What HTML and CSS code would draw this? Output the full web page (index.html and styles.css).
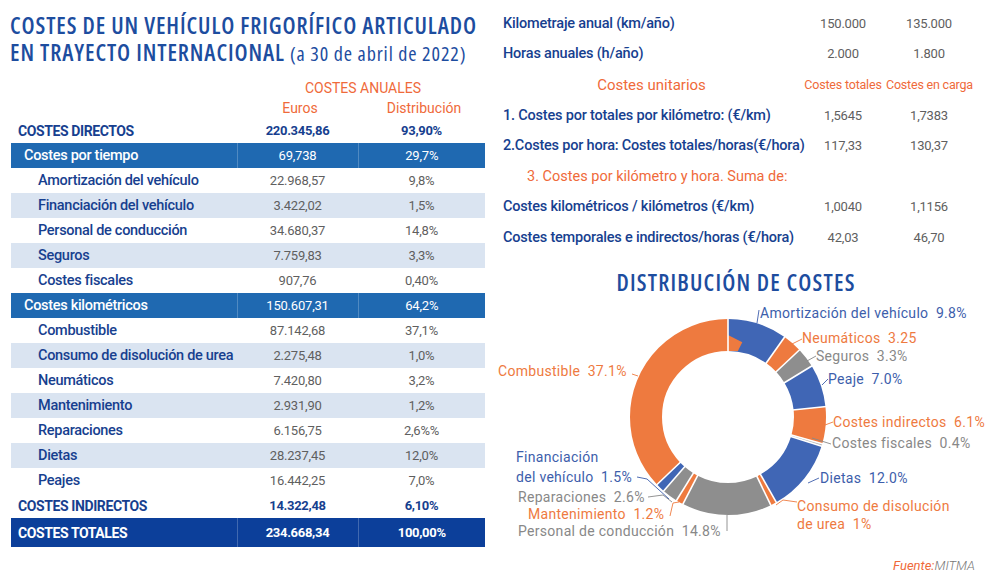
FILE: index.html
```html
<!DOCTYPE html>
<html lang="es">
<head>
<meta charset="utf-8">
<title>Costes de un vehículo frigorífico articulado</title>
<link rel="stylesheet" href="styles.css">
</head>
<body>
<div class="page">
  <section class="left">
    <h1 class="title"><span class="tl">COSTES DE UN VEHÍCULO FRIGORÍFICO ARTICULADO</span><span class="tl">EN TRAYECTO INTERNACIONAL <span class="date">(a 30 de abril de 2022)</span></span></h1>
    <div class="head">
      <div class="head-top">COSTES ANUALES</div>
      <div class="head-e">Euros</div>
      <div class="head-d">Distribución</div>
    </div>
    <table class="costs">
      <colgroup><col class="c1"><col class="c2"><col class="c3"></colgroup>
      <tr class="main"><td class="lbl">COSTES DIRECTOS</td><td>220.345,86</td><td>93,90%</td></tr>
      <tr class="grp"><td class="lbl">Costes por tiempo</td><td>69,738</td><td>29,7%</td></tr>
      <tr><td class="lbl">Amortización del vehículo</td><td>22.968,57</td><td>9,8%</td></tr>
      <tr class="alt"><td class="lbl">Financiación del vehículo</td><td>3.422,02</td><td>1,5%</td></tr>
      <tr><td class="lbl">Personal de conducción</td><td>34.680,37</td><td>14,8%</td></tr>
      <tr class="alt"><td class="lbl">Seguros</td><td>7.759,83</td><td>3,3%</td></tr>
      <tr><td class="lbl">Costes fiscales</td><td>907,76</td><td>0,40%</td></tr>
      <tr class="grp"><td class="lbl">Costes kilométricos</td><td>150.607,31</td><td>64,2%</td></tr>
      <tr><td class="lbl">Combustible</td><td>87.142,68</td><td>37,1%</td></tr>
      <tr class="alt"><td class="lbl">Consumo de disolución de urea</td><td>2.275,48</td><td>1,0%</td></tr>
      <tr><td class="lbl">Neumáticos</td><td>7.420,80</td><td>3,2%</td></tr>
      <tr class="alt"><td class="lbl">Mantenimiento</td><td>2.931,90</td><td>1,2%</td></tr>
      <tr><td class="lbl">Reparaciones</td><td>6.156,75</td><td>2,6%%</td></tr>
      <tr class="alt"><td class="lbl">Dietas</td><td>28.237,45</td><td>12,0%</td></tr>
      <tr><td class="lbl">Peajes</td><td>16.442,25</td><td>7,0%</td></tr>
      <tr class="main"><td class="lbl">COSTES INDIRECTOS</td><td>14.322,48</td><td>6,10%</td></tr>
      <tr class="total"><td class="lbl">COSTES TOTALES</td><td>234.668,34</td><td>100,00%</td></tr>
    </table>
  </section>

  <section class="right">
    <div class="units">
      <div class="k">Kilometraje anual (km/año)</div><div class="v">150.000</div><div class="v">135.000</div>
      <div class="k">Horas anuales (h/año)</div><div class="v">2.000</div><div class="v">1.800</div>
      <div class="oh">Costes unitarios</div><div class="oc">Costes totales</div><div class="oc">Costes en carga</div>
      <div class="k">1. Costes por totales por kilómetro: (€/km)</div><div class="v">1,5645</div><div class="v">1,7383</div>
      <div class="k">2.Costes por hora: Costes totales/horas(€/hora)</div><div class="v">117,33</div><div class="v">130,37</div>
      <div class="sub">3. Costes por kilómetro y hora. Suma de:</div>
      <div class="k">Costes kilométricos / kilómetros (€/km)</div><div class="v">1,0040</div><div class="v">1,1156</div>
      <div class="k">Costes temporales e indirectos/horas (€/hora)</div><div class="v">42,03</div><div class="v">46,70</div>
    </div>

    <h2 class="chart-title">DISTRIBUCIÓN DE COSTES</h2>

    <svg class="chart" width="510" height="250" viewBox="490 297 510 250" xmlns="http://www.w3.org/2000/svg">
      <g transform="rotate(-90 728 417)" fill="none" stroke-width="32">
        <circle cx="728" cy="417" r="82" pathLength="100" stroke="#4066b5" stroke-dasharray="9.8 90.2" stroke-dashoffset="0"/>
        <circle cx="728" cy="417" r="82" pathLength="100" stroke="#ee7a3f" stroke-dasharray="3.2 96.8" stroke-dashoffset="-9.8"/>
        <circle cx="728" cy="417" r="82" pathLength="100" stroke="#8e8e8e" stroke-dasharray="3.3 96.7" stroke-dashoffset="-13"/>
        <circle cx="728" cy="417" r="82" pathLength="100" stroke="#4066b5" stroke-dasharray="7 93" stroke-dashoffset="-16.3"/>
        <circle cx="728" cy="417" r="82" pathLength="100" stroke="#ee7a3f" stroke-dasharray="6.1 93.9" stroke-dashoffset="-23.3"/>
        <circle cx="728" cy="417" r="82" pathLength="100" stroke="#b5b5b5" stroke-dasharray="0.4 99.6" stroke-dashoffset="-29.4"/>
        <circle cx="728" cy="417" r="82" pathLength="100" stroke="#4066b5" stroke-dasharray="12 88" stroke-dashoffset="-29.8"/>
        <circle cx="728" cy="417" r="82" pathLength="100" stroke="#ee7a3f" stroke-dasharray="1 99" stroke-dashoffset="-41.8"/>
        <circle cx="728" cy="417" r="82" pathLength="100" stroke="#8e8e8e" stroke-dasharray="14.8 85.2" stroke-dashoffset="-42.8"/>
        <circle cx="728" cy="417" r="82" pathLength="100" stroke="#ee7a3f" stroke-dasharray="1.2 98.8" stroke-dashoffset="-57.6"/>
        <circle cx="728" cy="417" r="82" pathLength="100" stroke="#8e8e8e" stroke-dasharray="2.6 97.4" stroke-dashoffset="-58.8"/>
        <circle cx="728" cy="417" r="82" pathLength="100" stroke="#4066b5" stroke-dasharray="1.5 98.5" stroke-dashoffset="-61.4"/>
        <circle cx="728" cy="417" r="82" pathLength="100" stroke="#ee7a3f" stroke-dasharray="37.1 62.9" stroke-dashoffset="-62.9"/>
      </g>
      <g stroke="#fff" stroke-width="1.6">
        <line x1="728" y1="318" x2="728" y2="352" transform="rotate(0 728 417)"/>
        <line x1="728" y1="318" x2="728" y2="352" transform="rotate(35.28 728 417)"/>
        <line x1="728" y1="318" x2="728" y2="352" transform="rotate(46.8 728 417)"/>
        <line x1="728" y1="318" x2="728" y2="352" transform="rotate(58.68 728 417)"/>
        <line x1="728" y1="318" x2="728" y2="352" transform="rotate(83.88 728 417)"/>
        <line x1="728" y1="318" x2="728" y2="352" transform="rotate(105.84 728 417)"/>
        <line x1="728" y1="318" x2="728" y2="352" transform="rotate(107.28 728 417)"/>
        <line x1="728" y1="318" x2="728" y2="352" transform="rotate(150.48 728 417)"/>
        <line x1="728" y1="318" x2="728" y2="352" transform="rotate(154.08 728 417)"/>
        <line x1="728" y1="318" x2="728" y2="352" transform="rotate(207.36 728 417)"/>
        <line x1="728" y1="318" x2="728" y2="352" transform="rotate(211.68 728 417)"/>
        <line x1="728" y1="318" x2="728" y2="352" transform="rotate(221.04 728 417)"/>
        <line x1="728" y1="318" x2="728" y2="352" transform="rotate(226.44 728 417)"/>
      </g>
      <g fill="none" stroke-width="0.9">
        <polyline class="lb" points="759,310 757,323"/>
        <polyline class="lo" points="802,339 792,344"/>
        <polyline class="lg" points="816,356 807,361"/>
        <polyline class="lb" points="828,379 822,385"/>
        <polyline class="lo" points="833,422 825,425"/>
        <polyline class="lg" points="831,444 812,438"/>
        <polyline class="lb" points="819,478 808,483"/>
        <polyline class="lo" points="797,502 783,500 776,505"/>
        <polyline class="lg" points="727,531 727,515"/>
        <polyline class="lo" points="670,516 673,503 679,502"/>
        <polyline class="lg" points="648,497 663,495 672,502"/>
        <polyline class="lb" points="637,477 647,479 669,499"/>
        <polyline class="lo" points="632,374 638,376"/>
      </g>
      <g class="labels">
        <text class="tb" x="760" y="318">Amortización del vehículo  9.8%</text>
        <text class="to" x="802" y="343">Neumáticos  3.25</text>
        <text class="tg" x="816" y="361">Seguros  3.3%</text>
        <text class="tb" x="828" y="384">Peaje  7.0%</text>
        <text class="to" x="833" y="427">Costes indirectos  6.1%</text>
        <text class="tg" x="832" y="448">Costes fiscales  0.4%</text>
        <text class="tb" x="820" y="483">Dietas  12.0%</text>
        <text class="to" x="797" y="511">Consumo de disolución</text>
        <text class="to" x="797" y="529">de urea  1%</text>
        <text class="tg" x="518" y="536">Personal de conducción  14.8%</text>
        <text class="to" x="528" y="519">Mantenimiento  1.2%</text>
        <text class="tg" x="518" y="502">Reparaciones  2.6%</text>
        <text class="tb" x="516" y="462">Financiación</text>
        <text class="tb" x="516" y="482">del vehículo  1.5%</text>
        <text class="to" x="498" y="376">Combustible  37.1%</text>
      </g>
    </svg>

    <p class="source"><span class="src-k">Fuente:</span><span class="src-v">MITMA</span></p>
  </section>
</div>
</body>
</html>
```

FILE: styles.css
```css
* { box-sizing: border-box; margin: 0; padding: 0; }

html, body {
  width: 1000px;
  height: 578px;
  overflow: hidden;
  background: #fff;
}

body {
  font-family: Roboto, "Liberation Sans", sans-serif;
  color: #173f8f;
}

.page {
  display: flex;
  height: 578px;
}

/* ---------- left column ---------- */
.left {
  width: 490px;
  flex: none;
  padding-left: 10px;
}

.title {
  font-family: "Open Sans", "DejaVu Sans Condensed", sans-serif;
  font-stretch: 75%;
  font-weight: 600;
  font-size: 23px;
  letter-spacing: 0.9px;
  color: #1d4d9f;
  padding-top: 12px;
  white-space: nowrap;
}

.title .tl {
  display: block;
  height: 27px;
  line-height: 27px;
}

.title .date {
  font-size: 20px;
  font-weight: 500;
  letter-spacing: 0.9px;
}

.head {
  display: grid;
  grid-template-columns: 227px 121px 127px;
  grid-template-rows: 20px 20px;
  margin-top: 12px;
  color: #ef6a3a;
  font-size: 14px;
  align-items: center;
  text-align: center;
}

.head-top { grid-column: 2 / 4; grid-row: 1; padding-left: 4px; }
.head-e { grid-column: 2; grid-row: 2; padding-left: 5px; }
.head-d { grid-column: 3; grid-row: 2; padding-left: 5px; }

.costs {
  border-collapse: collapse;
  table-layout: fixed;
  width: 474px;
  margin-left: 1px;
}

.costs col.c1 { width: 226px; }
.costs col.c2 { width: 121px; }
.costs col.c3 { width: 127px; }

.costs td {
  height: 25px;
  padding: 0;
  font-size: 13px;
  letter-spacing: -0.2px;
  color: #5f5f5f;
  text-align: center;
  vertical-align: middle;
  white-space: nowrap;
}

.costs td.lbl {
  text-align: left;
  font-size: 14.5px;
  font-weight: 500;
  letter-spacing: -0.3px;
  color: #173f8f;
  padding-left: 27px;
}

.costs tr.alt td { background: #dae4f1; }

.costs tr.grp td {
  background: #1f69b1;
  color: #fff;
}
.costs tr.grp td.lbl { padding-left: 13px; color: #fff; }
.costs tr.grp td + td,
.costs tr.total td + td { border-left: 1px solid rgba(255, 255, 255, 0.22); }

.costs tr.main td {
  font-weight: 700;
  font-size: 13px;
  letter-spacing: -0.3px;
  color: #173f8f;
}
.costs tr.main td.lbl { padding-left: 7px; font-size: 14px; letter-spacing: -0.4px; }

.costs tr.total td {
  height: 29px;
  background: #0c3f9a;
  color: #fff;
  font-weight: 700;
  font-size: 13px;
  letter-spacing: -0.3px;
}
.costs tr.total td.lbl { padding-left: 7px; font-size: 14px; color: #fff; letter-spacing: -0.4px; }

/* ---------- right column ---------- */
.right {
  width: 510px;
  flex: none;
}

.units {
  display: grid;
  grid-template-columns: 297px 86px 86px;
  grid-auto-rows: 30.6px;
  align-items: center;
  padding: 8px 0 0 13px;
}

.units .k {
  font-size: 14.5px;
  font-weight: 500;
  color: #173f8f;
  white-space: nowrap;
  letter-spacing: -0.2px;
}

.units .v {
  text-align: center;
  font-size: 13px;
  letter-spacing: -0.2px;
  color: #5f5f5f;
}

.units .oh {
  text-align: center;
  font-size: 15px;
  color: #ef6a3a;
  padding-top: 2px;
}

.units .oc {
  text-align: center;
  font-size: 12.5px;
  color: #ef6a3a;
  white-space: nowrap;
  letter-spacing: -0.2px;
}

.units .sub {
  grid-column: 1 / -1;
  padding-left: 24px;
  font-size: 14.5px;
  color: #ef6a3a;
}

.chart-title {
  font-family: "Open Sans", "DejaVu Sans Condensed", sans-serif;
  font-stretch: 75%;
  font-weight: 600;
  font-size: 23px;
  letter-spacing: 1.2px;
  line-height: 30px;
  margin-top: 14px;
  padding-right: 18px;
  text-align: center;
  color: #1d4d9f;
}

.chart {
  display: block;
}

.chart .labels text {
  font-family: Roboto, "Liberation Sans", sans-serif;
  font-size: 14px;
  letter-spacing: 0.3px;
  white-space: pre;
}

.chart .tb { fill: #3d5eab; }
.chart .to { fill: #ee7a3f; }
.chart .tg { fill: #888; }
.chart .lb { stroke: #3d5eab; }
.chart .lo { stroke: #ee7a3f; }
.chart .lg { stroke: #888; }

.source {
  text-align: right;
  padding-right: 25px;
  margin-top: 10px;
  font-size: 13px;
  font-style: italic;
  line-height: 18px;
}

.src-k { color: #ef6a3a; }
.src-v { color: #777; font-weight: 300; }
```
